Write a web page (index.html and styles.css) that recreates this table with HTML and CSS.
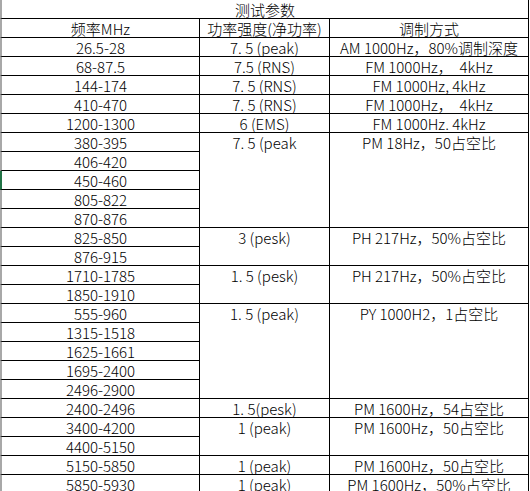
FILE: index.html
```html
<!DOCTYPE html>
<html lang="zh-CN">
<head>
<meta charset="utf-8">
<title>测试参数</title>
<link rel="stylesheet" href="styles.css">
</head>
<body>
<div class="sheet">
  <div class="cell title">测试参数</div>

  <div class="cell c1">频率MHz</div>
  <div class="cell c2">功率强度(净功率)</div>
  <div class="cell c3">调制方式</div>

  <div class="cell c1">26.5-28</div>
  <div class="cell c2">7. 5 (peak)</div>
  <div class="cell c3">AM 1000Hz，80%调制深度</div>

  <div class="cell c1">68-87.5</div>
  <div class="cell c2">7.5 (RNS)</div>
  <div class="cell c3">FM 1000Hz，  4kHz</div>

  <div class="cell c1">144-174</div>
  <div class="cell c2">7. 5 (RNS)</div>
  <div class="cell c3">FM 1000Hz, 4kHz</div>

  <div class="cell c1">410-470</div>
  <div class="cell c2">7. 5 (RNS)</div>
  <div class="cell c3">FM 1000Hz，  4kHz</div>

  <div class="cell c1">1200-1300</div>
  <div class="cell c2">6 (EMS)</div>
  <div class="cell c3">FM 1000Hz. 4kHz</div>

  <div class="cell c1">380-395</div>
  <div class="cell c2 span5">7. 5 (peak</div>
  <div class="cell c3 span5">PM 18Hz，50占空比</div>
  <div class="cell c1">406-420</div>
  <div class="cell c1 selected">450-460</div>
  <div class="cell c1">805-822</div>
  <div class="cell c1">870-876</div>

  <div class="cell c1">825-850</div>
  <div class="cell c2 span2">3 (pesk)</div>
  <div class="cell c3 span2">PH 217Hz，50%占空比</div>
  <div class="cell c1">876-915</div>

  <div class="cell c1">1710-1785</div>
  <div class="cell c2 span2">1. 5 (pesk)</div>
  <div class="cell c3 span2">PH 217Hz，50%占空比</div>
  <div class="cell c1">1850-1910</div>

  <div class="cell c1">555-960</div>
  <div class="cell c2 span5">1. 5 (peak)</div>
  <div class="cell c3 span5">PY 1000H2，1占空比</div>
  <div class="cell c1">1315-1518</div>
  <div class="cell c1">1625-1661</div>
  <div class="cell c1">1695-2400</div>
  <div class="cell c1">2496-2900</div>

  <div class="cell c1">2400-2496</div>
  <div class="cell c2">1. 5(pesk)</div>
  <div class="cell c3">PM 1600Hz，54占空比</div>

  <div class="cell c1">3400-4200</div>
  <div class="cell c2 span2">1 (peak)</div>
  <div class="cell c3 span2">PM 1600Hz，50占空比</div>
  <div class="cell c1">4400-5150</div>

  <div class="cell c1">5150-5850</div>
  <div class="cell c2">1 (peak)</div>
  <div class="cell c3">PM 1600Hz，50占空比</div>

  <div class="cell c1">5850-5930</div>
  <div class="cell c2">1 (peak)</div>
  <div class="cell c3">PM 1600Hz，50%占空比</div>
</div>
</body>
</html>
```

FILE: styles.css
```css
html, body {
  margin: 0;
  padding: 0;
  background: #fff;
}

body {
  width: 530px;
  height: 491px;
  overflow: hidden;
  font-family: "Noto Sans CJK SC", "Noto Sans", "Liberation Sans", sans-serif;
  font-size: 15px;
  font-weight: 300;
  color: #000;
}

.sheet {
  display: grid;
  grid-template-columns: 200px 130px 199px;
  grid-auto-rows: 19px;
  width: 529px;
}

.cell {
  box-sizing: border-box;
  border-right: 1px solid #000;
  border-bottom: 1px solid #000;
  padding-top: 1px;
  line-height: 17px;
  text-align: center;
  white-space: pre;
  overflow: hidden;
}

.title {
  grid-column: 1 / 4;
  border-left: 2px solid #a8a8a8;
}

.c1 {
  grid-column: 1;
  border-left: 2px solid #a8a8a8;
}

.c1.selected {
  border-left-color: #217346;
}

.c2 {
  grid-column: 2;
}

.c3 {
  grid-column: 3;
}

.span2 {
  grid-row: span 2;
}

.span5 {
  grid-row: span 5;
}
```
